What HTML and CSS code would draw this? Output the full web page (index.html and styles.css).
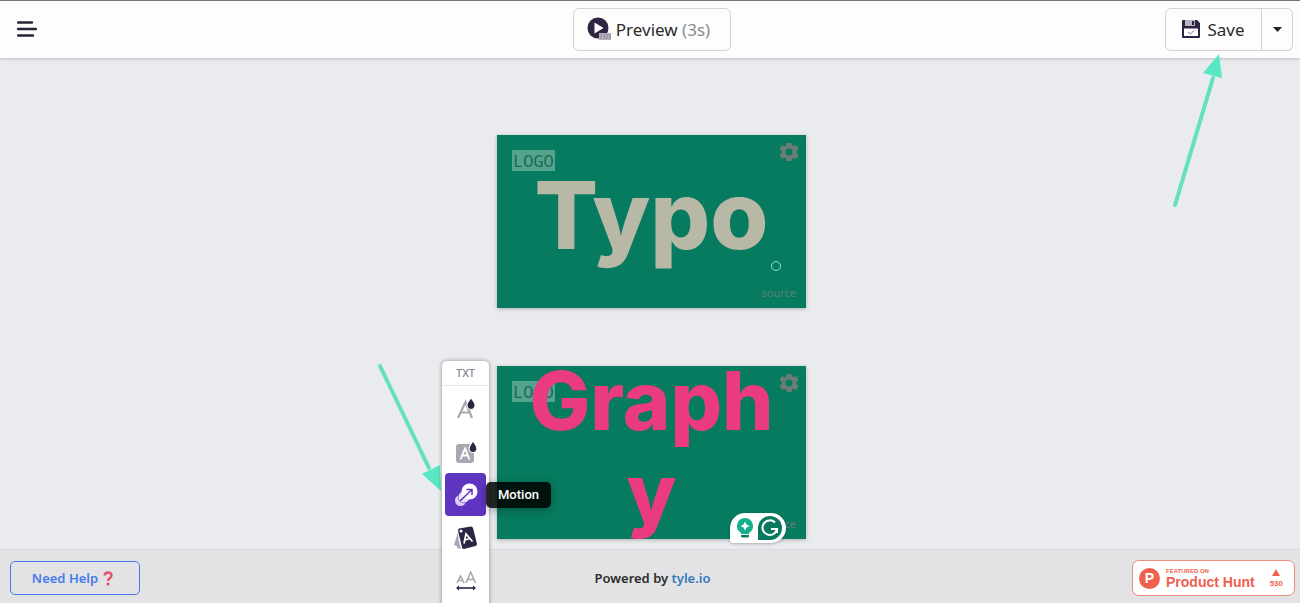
FILE: index.html
```html
<!DOCTYPE html>
<html lang="en">
<head>
    <meta charset="UTF-8">
    <meta name="viewport" content="width=device-width, initial-scale=1.0">
    <title>Tyle Editor</title>
    <link rel="stylesheet" href="styles.css">
</head>
<body>
    <header class="topbar">
        <button class="menu-btn" aria-label="Menu">
            <svg width="20" height="18" viewBox="0 0 20 18"><path d="M1 2.500h14M1 9h18M1 15.500h15" stroke="#292338" stroke-width="2.400" stroke-linecap="round"/></svg>
        </button>
        <button class="btn preview-btn">
            <svg width="25" height="24" viewBox="0 0 25 24">
                <circle cx="11" cy="11" r="10.500" fill="#2d2542"/>
                <path d="M7.500 5.500v11l9-5.500z" fill="#fff"/>
                <path d="M12 16h12v7H12z" fill="#b5afbc"/>
                <path d="M14 17v5M17.500 17v5M20 17v5M23 17v5" stroke="#938a9e"/>
            </svg>
            <span>Preview <span class="muted">(3s)</span></span>
        </button>
        <div class="save-group">
            <button class="btn save-btn">
                <svg width="18" height="18" viewBox="0 0 18 18">
                    <path d="M1 0h14l3 3v14a1 1 0 0 1-1 1H1a1 1 0 0 1-1-1V1a1 1 0 0 1 1-1z" fill="#2d2542"/>
                    <path d="M3 0h10v6H3z" fill="#b9b4c0"/>
                    <path d="M10 1h2v4h-2z" fill="#2d2542"/>
                    <path d="M2 8.500h14V16H2z" fill="#fff"/>
                    <path d="M6 12l2.500 2 4-4" fill="none" stroke="#817989"/>
                </svg>
                Save
            </button>
            <button class="btn caret-btn" aria-label="More save options">
                <svg width="9" height="5" viewBox="0 0 9 5"><path d="M0 0h9L4.500 5z" fill="#222"/></svg>
            </button>
            <svg class="arrow-save" width="60" height="160" viewBox="0 0 60 160">
                <path d="M9 151L47 24" stroke="#65dfc2" stroke-width="4" stroke-linecap="round"/>
                <path d="M53 0L37 19l19 5z" fill="#59e6c3"/>
            </svg>
        </div>
    </header>

    <main class="stage">
        <section class="tile">
            <span class="logo">LOGO</span>
            <button class="gear" aria-label="Tile settings">
                <svg width="18" height="18" viewBox="3 3 18 18"><path fill="currentColor" d="M19.400 13c.04-.3.060-.65.060-1s-.02-.7-.07-1l2-1.600a.5.5 0 0 0 .12-.6l-1.900-3.300a.5.5 0 0 0-.6-.2l-2.400 1a7 7 0 0 0-1.700-1l-.3-2.500a.5.5 0 0 0-.5-.4h-4a.5.5 0 0 0-.5.4l-.3 2.500a7 7 0 0 0-1.700 1l-2.400-1a.5.5 0 0 0-.6.2L2.700 8.800a.5.5 0 0 0 .12.600l2 1.600c-.1.600-.1 1.400 0 2l-2 1.600a.5.5 0 0 0-.12.600l1.900 3.300c.1.200.4.300.6.200l2.400-1a7 7 0 0 0 1.700 1l.3 2.500c0 .2.200.4.500.4h4c.3 0 .5-.2.500-.4l.3-2.500a7 7 0 0 0 1.700-1l2.400 1c.2.100.5 0 .6-.2l1.900-3.300a.5.5 0 0 0-.12-.6zM12 15.500a3.500 3.500 0 1 1 0-7 3.500 3.500 0 0 1 0 7z"/></svg>
            </button>
            <h2 class="headline headline-sand">Typo</h2>
            <span class="handle"></span>
            <span class="source">source</span>
        </section>

        <section class="tile">
            <span class="logo">LOGO</span>
            <button class="gear" aria-label="Tile settings">
                <svg width="18" height="18" viewBox="3 3 18 18"><path fill="currentColor" d="M19.400 13c.04-.3.060-.65.060-1s-.02-.7-.07-1l2-1.600a.5.5 0 0 0 .12-.6l-1.900-3.300a.5.5 0 0 0-.6-.2l-2.400 1a7 7 0 0 0-1.700-1l-.3-2.500a.5.5 0 0 0-.5-.4h-4a.5.5 0 0 0-.5.4l-.3 2.500a7 7 0 0 0-1.700 1l-2.400-1a.5.5 0 0 0-.6.2L2.700 8.800a.5.5 0 0 0 .12.600l2 1.600c-.1.600-.1 1.400 0 2l-2 1.600a.5.5 0 0 0-.12.600l1.900 3.300c.1.200.4.300.6.200l2.400-1a7 7 0 0 0 1.700 1l.3 2.500c0 .2.200.4.500.4h4c.3 0 .5-.2.500-.4l.3-2.500a7 7 0 0 0 1.700-1l2.400 1c.2.100.5 0 .6-.2l1.900-3.300a.5.5 0 0 0-.12-.6zM12 15.500a3.500 3.500 0 1 1 0-7 3.500 3.500 0 0 1 0 7z"/></svg>
            </button>
            <h2 class="headline headline-pink">Graph<br>y</h2>
            <span class="source">source</span>

            <div class="assistant">
                <svg width="18" height="20" viewBox="0 0 18 20">
                    <path d="M9 0a8 8 0 0 0-4 14.900V16h8v-1.100A8 8 0 0 0 9 0z" fill="#12b08c"/>
                    <path d="M9 3.500l1.500 3 3 1.500-3 1.500-1.500 3-1.500-3-3-1.500 3-1.500z" fill="#fff"/>
                    <path d="M5 17h8v1.200a1.500 1.500 0 0 1-1.500 1.300h-5A1.500 1.500 0 0 1 5 18.200z" fill="#087a62"/>
                </svg>
                <svg width="24" height="24" viewBox="0 0 24 24">
                    <path d="M12 0a12 12 0 1 1 0 24H0V12A12 12 0 0 1 12 0z" fill="#08785f"/>
                    <path d="M17 6.500A7.300 7.300 0 1 0 19 13H13M19 12v5" fill="none" stroke="#fff" stroke-width="2"/>
                </svg>
            </div>

            <svg class="arrow-motion" width="70" height="132" viewBox="0 0 70 132">
                <path d="M5 5L54 107" stroke="#65dfc2" stroke-width="4" stroke-linecap="round"/>
                <path d="M66 130L47 113l18-9z" fill="#59e6c3"/>
            </svg>

            <nav class="toolbar">
                <span class="toolbar-title">TXT</span>
                <button class="tool" aria-label="Text color">
                    <svg width="22" height="24" viewBox="0 0 22 24">
                        <path d="M3 21L10.500 5 17 21M6 15.500h9" fill="none" stroke="#aaa7b1" stroke-width="2.200"/>
                        <path d="M16 1c2 3 4 5 4 7.500a4 4 0 0 1-8 0C12 6 14 4 16 1z" fill="#2d2542" stroke="#fff"/>
                    </svg>
                </button>
                <button class="tool" aria-label="Text background">
                    <svg width="22" height="24" viewBox="0 0 22 24">
                        <rect x="1" y="4" width="18" height="19" rx="3" fill="#aaa7b1"/>
                        <path d="M5.500 19.500L10 8.500l4.500 11M7.500 15.500h5.500" fill="none" stroke="#fff" stroke-width="1.800"/>
                        <path d="M18 1c2 3 4 5 4 7.500a4 4 0 0 1-8 0C14 6 16 4 18 1z" fill="#2d2542" stroke="#fff" stroke-width="1.200"/>
                    </svg>
                </button>
                <button class="tool tool-active" aria-label="Motion">
                    <svg width="24" height="24" viewBox="0 0 24 24">
                        <circle cx="6.500" cy="17.500" r="5.500" fill="#d8cdf2"/>
                        <circle cx="10" cy="14" r="5.800" fill="#e9e2f8" stroke="#5e35c1" stroke-width=".6"/>
                        <circle cx="15.500" cy="8.500" r="8" fill="#fff"/>
                        <path d="M6 18L18 6.500M12.500 6.500H18V12" fill="none" stroke="#5b32bd" stroke-width="1.500"/>
                    </svg>
                    <span class="tooltip">Motion</span>
                </button>
                <button class="tool" aria-label="Text style">
                    <svg width="24" height="24" viewBox="0 0 24 24">
                        <path d="M4 6L0 19l5 2zM3 8v14l4 1z" fill="#aaa7b1"/>
                        <path d="M5 2.500L17 .500q1.500 0 2 1.500l4 16q0 1.500-1.500 2L10 23q-1.500 0-2-1.500L4 4.500q0-1.500 1-2z" fill="#2d2542"/>
                        <circle cx="7" cy="5" r="1.500" fill="#fff"/>
                        <path d="M10 17.500L12 8l6.500 7.500M11 14l5-1.500" fill="none" stroke="#fff" stroke-width="1.800"/>
                    </svg>
                </button>
                <button class="tool" aria-label="Text size">
                    <svg width="22" height="20" viewBox="0 0 22 20">
                        <path d="M2 12l3.500-7L9 12M3.300 9.500h4.400M11 12l4.700-11 4.800 11M12.500 8.500h6.500" fill="none" stroke="#aaa7b1" stroke-width="1.600"/>
                        <path d="M2 17h18" stroke="#2d2542" stroke-width="1.600"/>
                        <path d="M1 17l3-2.500v5zM21 17l-3-2.500v5z" fill="#2d2542"/>
                    </svg>
                </button>
            </nav>
        </section>
    </main>

    <footer class="footer">
        <button class="help-btn">Need Help
            <svg width="10" height="15" viewBox="0 0 10 15"><path d="M1.500 4.500C2 .5 8.500.5 8.500 4.300c0 3-3.500 2.700-3.500 5.700" fill="none" stroke="#e0526f" stroke-width="2.500"/><circle cx="5" cy="13" r="1.600" fill="#e0526f"/></svg>
        </button>
        <p class="powered">Powered by <a href="#">tyle.io</a></p>
        <a class="ph-badge" href="#">
            <span class="ph-mark">P</span>
            <span class="ph-text">
                <span class="ph-small">FEATURED ON</span>
                <span class="ph-name">Product Hunt</span>
            </span>
            <span class="ph-votes">
                <svg width="8" height="7" viewBox="0 0 8 7"><path d="M4 0l4 7H0z" fill="#f0604f"/></svg>
                530
            </span>
        </a>
    </footer>
</body>
</html>
```

FILE: styles.css
```css
* {
    box-sizing: border-box;
}

body {
    font-family: "Noto Sans", sans-serif;
    margin: 0;
    height: 100vh;
    display: flex;
    flex-direction: column;
    background: #e9ebee;
    color: #2b2b2b;
    overflow: hidden;
}

button {
    font-family: inherit;
    margin: 0;
    padding: 0;
    border: none;
    background: none;
    color: inherit;
    cursor: pointer;
}

svg {
    flex-shrink: 0;
}

/* Top bar */
.topbar {
    display: grid;
    grid-template-columns: 1fr auto 1fr;
    align-items: center;
    height: 58px;
    padding: 0 7px 1px 11px;
    background: #fdfdfd;
    border-top: 1px solid #77757a;
    box-shadow: 0 1px 3px rgba(0, 0, 0, 0.2);
    z-index: 1;
}

.menu-btn {
    display: flex;
    justify-self: start;
    padding: 6px;
}

.btn {
    display: flex;
    align-items: center;
    justify-content: center;
    height: 43px;
    border: 1px solid #d3d3d6;
    border-radius: 6px;
    background: #fdfdfd;
    font-size: 17px;
}

.preview-btn {
    width: 158px;
    gap: 4px;
    padding-right: 7px;
}

.muted {
    color: #8a8a8a;
}

.save-group {
    position: relative;
    display: flex;
    justify-self: end;
}

.save-btn {
    width: 97px;
    gap: 7px;
    border-radius: 6px 0 0 6px;
}

.caret-btn {
    width: 31px;
    border-left: none;
    border-radius: 0 6px 6px 0;
}

.arrow-save {
    position: absolute;
    top: 46px;
    right: 67px;
    pointer-events: none;
}

/* Tiles */
.stage {
    flex: 1;
    display: flex;
    flex-direction: column;
    align-items: center;
    gap: 58px;
    min-height: 0;
    padding: 77px 0 0 3px;
}

.tile {
    position: relative;
    flex-shrink: 0;
    width: 309px;
    height: 173px;
    background: #077b5f;
    box-shadow: 0 1px 4px rgba(0, 0, 0, 0.25);
}

.logo {
    position: absolute;
    top: 15px;
    left: 15px;
    padding: 0 1px;
    background: #56a38d;
    color: #176b56;
    font-family: "Noto Sans Mono", "DejaVu Sans Mono", monospace;
    font-size: 17px;
    line-height: 21px;
}

.gear {
    position: absolute;
    top: 8px;
    right: 8px;
    display: flex;
    color: #6b7d75;
}

.headline {
    position: absolute;
    left: 0;
    right: 0;
    margin: 0;
    font-family: Inter, sans-serif;
    font-weight: 800;
    text-align: center;
}

.headline-sand {
    top: 26px;
    font-size: 94px;
    line-height: 108px;
    color: #b8b8a6;
}

.headline-pink {
    top: -11px;
    font-size: 81px;
    line-height: 92px;
    color: #ea3a80;
}

.handle {
    position: absolute;
    right: 25px;
    bottom: 37px;
    width: 10px;
    height: 10px;
    border: 1px solid #8fe0d8;
    border-radius: 50%;
}

.source {
    position: absolute;
    right: 10px;
    bottom: 8px;
    font-size: 11px;
    line-height: 15px;
    color: #5f8074;
}

.assistant {
    position: absolute;
    right: 20px;
    bottom: -4px;
    display: flex;
    align-items: center;
    justify-content: center;
    gap: 4px;
    width: 56px;
    height: 30px;
    padding-left: 2px;
    background: #fff;
    border-radius: 15px 15px 15px 3px;
    box-shadow: 0 1px 3px rgba(0, 0, 0, 0.25);
}

.arrow-motion {
    position: absolute;
    top: -5px;
    left: -122px;
    pointer-events: none;
}

/* Floating text toolbar */
.toolbar {
    position: absolute;
    top: -5px;
    left: -55px;
    display: flex;
    flex-direction: column;
    width: 47px;
    height: 260px;
    background: #fff;
    border-radius: 5px;
    box-shadow: 0 0 4px rgba(0, 0, 0, 0.4);
    z-index: 2;
}

.toolbar-title {
    margin-bottom: 1px;
    border-bottom: 1px solid #e8e8ea;
    font-size: 11px;
    font-weight: 500;
    line-height: 24px;
    text-align: center;
    color: #88868c;
}

.tool {
    position: relative;
    display: flex;
    align-items: center;
    justify-content: center;
    height: 43px;
    margin: 0 3px;
    border-radius: 4px;
}

.tool-active {
    background: #5e35c1;
}

.tooltip {
    position: absolute;
    left: 100%;
    padding: 0 12px;
    background: rgba(0, 0, 0, 0.85);
    border-radius: 5px;
    box-shadow: 0 2px 8px rgba(0, 0, 0, 0.3);
    color: #fff;
    font-family: Roboto, sans-serif;
    font-size: 13px;
    font-weight: 500;
    line-height: 26px;
}

/* Footer */
.footer {
    display: grid;
    grid-template-columns: 1fr auto 1fr;
    align-items: center;
    height: 54px;
    padding: 3px 5px 0 10px;
    background: #e3e3e5;
    border-top: 1px solid #d7d8dc;
}

.help-btn {
    display: flex;
    align-items: center;
    justify-content: center;
    justify-self: start;
    gap: 5px;
    width: 130px;
    height: 34px;
    padding-right: 5px;
    border: 1px solid #467bec;
    border-radius: 5px;
    color: #467bec;
    font-size: 13px;
    font-weight: 600;
}

.powered {
    margin: 0;
    font-size: 13px;
    font-weight: 600;
}

.powered a {
    color: #337ab7;
    text-decoration: none;
}

.ph-badge {
    display: flex;
    align-items: center;
    justify-self: end;
    gap: 6px;
    width: 163px;
    height: 36px;
    padding: 0 11px 0 6px;
    background: #fff;
    border: 1px solid #ef8a7e;
    border-radius: 7px;
    color: #f0604f;
    font-family: "Liberation Sans", Arial, sans-serif;
    font-weight: bold;
    text-decoration: none;
}

.ph-mark {
    width: 21px;
    height: 21px;
    border-radius: 50%;
    background: #f0604f;
    color: #fff;
    font-size: 14px;
    line-height: 21px;
    text-align: center;
}

.ph-text {
    display: flex;
    flex-direction: column;
}

.ph-small {
    font-size: 6px;
    line-height: 7px;
}

.ph-name {
    font-size: 14px;
    line-height: 14px;
}

.ph-votes {
    display: flex;
    flex-direction: column;
    align-items: center;
    gap: 3px;
    margin-left: auto;
    font-size: 8px;
    line-height: 9px;
}
```
